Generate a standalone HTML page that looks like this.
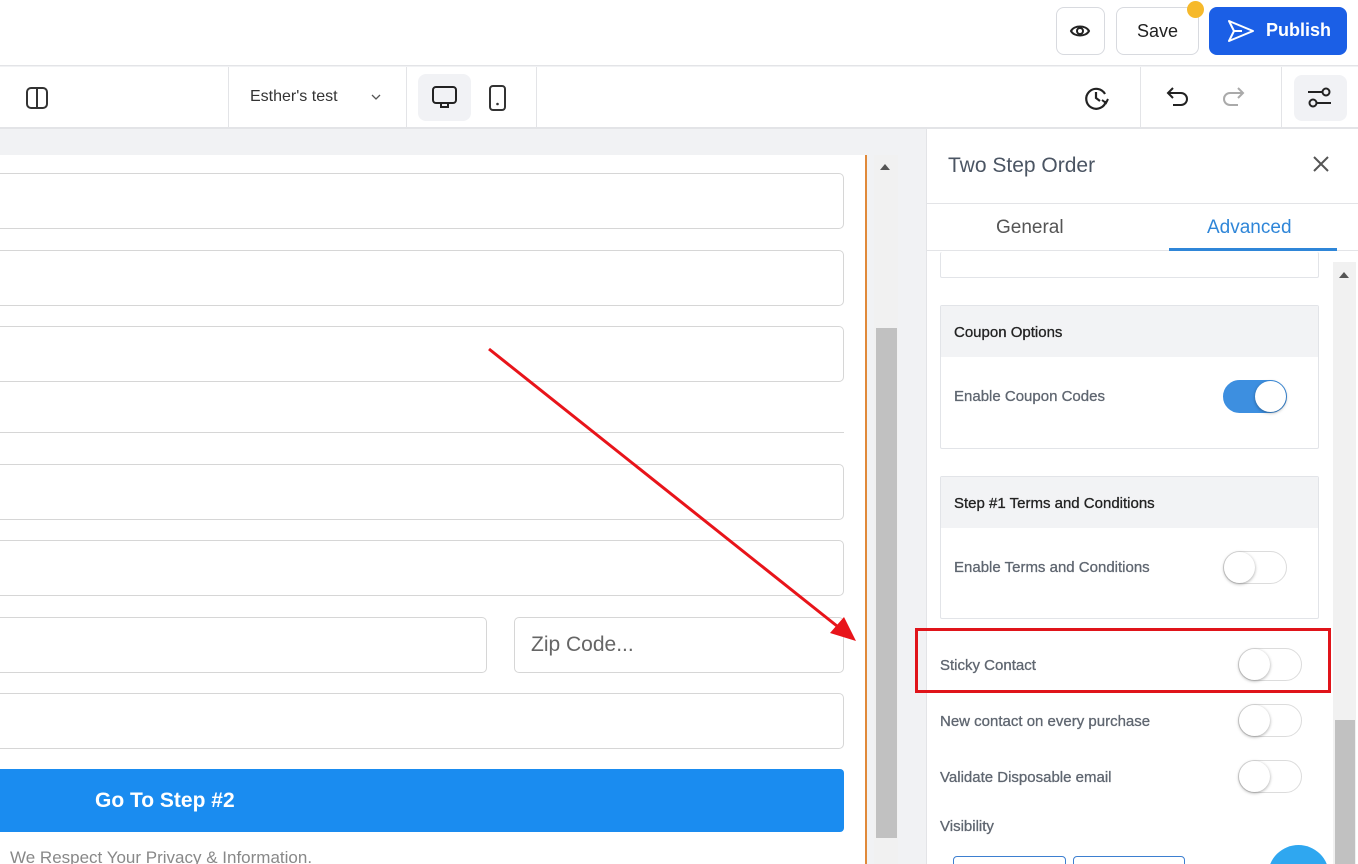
<!DOCTYPE html>
<html style="width:1358px;height:864px;overflow:hidden"><head><meta charset="utf-8"><style>
*{box-sizing:border-box;margin:0;padding:0}
body{width:1358px;height:864px;overflow:hidden;position:relative;background:#f1f2f4;font-family:"Liberation Sans",sans-serif}
.a{position:absolute}
.inp{position:absolute;background:#fff;border:1px solid #d6d6d6;border-radius:5px}
.tg{position:absolute;width:64px;height:33px;border:1px solid #dcdcdc;border-radius:17px;background:#fff}
.tg::after{content:"";position:absolute;left:0;top:0;width:31px;height:31px;border-radius:50%;background:#fff;box-shadow:0 1px 3px rgba(0,0,0,.35)}
.tg.on{background:#3d8fe0;border-color:#3d8fe0}
.tg.on::after{left:31px}
.lbl{position:absolute;font-size:15px;color:#5f6670;-webkit-text-stroke:0.3px #5f6670}
.box{position:absolute;left:940px;width:379px;border:1px solid #e2e4e8;border-radius:2px;background:#fff}
.box .h{height:51px;background:#f2f3f5;font-size:15px;color:#222;padding:18px 0 0 13px;-webkit-text-stroke:0.3px #222}
.vl{position:absolute;top:67px;width:1px;height:61px;background:#e3e4e7}
</style></head><body>
<div class="a" style="left:0;top:0;width:1358px;height:66px;background:#fff;border-bottom:1px solid #e3e4e7"></div>
<div class="a" style="left:1056px;top:7px;width:49px;height:48px;border:1px solid #d8dadf;border-radius:8px;background:#fff"></div>
<svg class="a" style="left:1069px;top:21px" width="22" height="20" viewBox="0 0 22 20"><path d="M2 10C5 4 17 4 20 10C17 16 5 16 2 10Z" fill="none" stroke="#222" stroke-width="2"/><circle cx="11" cy="10" r="3" fill="none" stroke="#222" stroke-width="2"/></svg>
<div class="a" style="left:1116px;top:7px;width:83px;height:48px;border:1px solid #d8dadf;border-radius:8px;background:#fff;font-size:18px;color:#222;text-align:center;line-height:46px">Save</div>
<div class="a" style="left:1187px;top:1px;width:17px;height:17px;border-radius:50%;background:#f6b92b"></div>
<div class="a" style="left:1209px;top:7px;width:138px;height:48px;border-radius:8px;background:#1b5fe6;color:#fff;font-size:18px;font-weight:bold;line-height:46px;padding-left:57px">Publish</div>
<svg class="a" style="left:1227px;top:19px" width="28" height="24" viewBox="0 0 28 24"><path d="M2 2L26 12L2 22L7 12Z M7 12H15" fill="none" stroke="#fff" stroke-width="2" stroke-linejoin="round"/></svg>
<div class="a" style="left:0;top:67px;width:1358px;height:62px;background:#fff;border-bottom:2px solid #e3e4e7"></div>
<div class="vl" style="left:228px"></div><div class="vl" style="left:406px"></div><div class="vl" style="left:536px"></div><div class="vl" style="left:1140px"></div><div class="vl" style="left:1281px"></div>
<svg class="a" style="left:25px;top:86px" width="24" height="24" viewBox="0 0 24 24"><rect x="2" y="2" width="20" height="20" rx="4" fill="none" stroke="#333" stroke-width="2"/><path d="M12 2V22" stroke="#333" stroke-width="2"/></svg>
<div class="a" style="left:250px;top:88px;font-size:16px;color:#333">Esther's test</div>
<svg class="a" style="left:370px;top:92px" width="12" height="10" viewBox="0 0 12 10"><path d="M2 3L6 7L10 3" fill="none" stroke="#555" stroke-width="1.3"/></svg>
<div class="a" style="left:418px;top:74px;width:53px;height:47px;border-radius:8px;background:#f1f2f5"></div>
<svg class="a" style="left:431px;top:85px" width="28" height="26" viewBox="0 0 28 26"><rect x="2" y="2" width="23" height="16" rx="3" fill="none" stroke="#222" stroke-width="2"/><rect x="10" y="18" width="7" height="4" fill="none" stroke="#222" stroke-width="2"/></svg>
<svg class="a" style="left:488px;top:84px" width="20" height="28" viewBox="0 0 20 28"><rect x="2" y="2" width="15" height="24" rx="3" fill="none" stroke="#333" stroke-width="2"/><circle cx="9.5" cy="20" r="1.3" fill="#333"/></svg>
<svg class="a" style="left:1083px;top:84px" width="28" height="28" viewBox="0 0 28 28"><path d="M22 10A10 10 0 1 0 23 17" fill="none" stroke="#222" stroke-width="2.2"/><path d="M13 8V14L17 17" fill="none" stroke="#222" stroke-width="2.2"/><path d="M19 16L23 19L25 15" fill="none" stroke="#222" stroke-width="2"/></svg>
<svg class="a" style="left:1165px;top:85px" width="26" height="24" viewBox="0 0 26 24"><path d="M8 3L3 8L8 13M3 8H16A6 6 0 0 1 16 20H8" fill="none" stroke="#222" stroke-width="2"/></svg>
<svg class="a" style="left:1220px;top:85px" width="26" height="24" viewBox="0 0 26 24"><path d="M18 3L23 8L18 13M23 8H10A6 6 0 0 0 10 20H18" fill="none" stroke="#aaa" stroke-width="2"/></svg>
<div class="a" style="left:1294px;top:75px;width:53px;height:46px;border-radius:8px;background:#f1f2f5"></div>
<svg class="a" style="left:1306px;top:86px" width="28" height="24" viewBox="0 0 28 24"><circle cx="20" cy="6" r="3.5" fill="none" stroke="#222" stroke-width="2"/><path d="M2 6H16" stroke="#222" stroke-width="2"/><circle cx="7" cy="17" r="3.5" fill="none" stroke="#222" stroke-width="2"/><path d="M11 17H25" stroke="#222" stroke-width="2"/></svg>
<div class="a" style="left:0;top:155px;width:866px;height:709px;background:#fff"></div>
<div class="a" style="left:865px;top:155px;width:2px;height:709px;background:#e0893a"></div>
<div class="a" style="left:874px;top:155px;width:24px;height:709px;background:#f1f1f1"></div>
<div class="a" style="left:876px;top:328px;width:21px;height:510px;background:#c1c1c1"></div>
<div class="a" style="left:880px;top:164px;width:0;height:0;border-left:5px solid transparent;border-right:5px solid transparent;border-bottom:6px solid #555"></div>
<div class="inp" style="left:-10px;top:173px;width:854px;height:56px"></div>
<div class="inp" style="left:-10px;top:250px;width:854px;height:56px"></div>
<div class="inp" style="left:-10px;top:326px;width:854px;height:56px"></div>
<div class="a" style="left:0;top:432px;width:844px;height:1px;background:#d6d6d6"></div>
<div class="inp" style="left:-10px;top:464px;width:854px;height:56px"></div>
<div class="inp" style="left:-10px;top:540px;width:854px;height:56px"></div>
<div class="inp" style="left:-10px;top:617px;width:497px;height:56px"></div>
<div class="inp" style="left:514px;top:617px;width:330px;height:56px;font-size:21px;color:#666;padding:15px 0 0 16px">Zip Code...</div>
<div class="inp" style="left:-10px;top:693px;width:854px;height:56px"></div>
<div class="a" style="left:-10px;top:769px;width:854px;height:63px;background:#1a8cf0;border-radius:4px;color:#fff;font-size:21px;font-weight:bold;padding:20px 0 0 105px">Go To Step #2</div>
<div class="a" style="left:10px;top:848px;font-size:17px;color:#888">We Respect Your Privacy &amp; Information.</div>
<div class="a" style="left:926px;top:129px;width:432px;height:735px;background:#fff;border-left:1px solid #e3e4e7"></div>
<div class="a" style="left:948px;top:154px;font-size:21px;color:#4b5563">Two Step Order</div>
<svg class="a" style="left:1312px;top:155px" width="18" height="18" viewBox="0 0 18 18"><path d="M2 2L16 16M16 2L2 16" stroke="#555" stroke-width="2"/></svg>
<div class="a" style="left:926px;top:203px;width:432px;height:1px;background:#e3e4e7"></div>
<div class="a" style="left:926px;top:250px;width:432px;height:1px;background:#e3e4e7"></div>
<div class="a" style="left:996px;top:217px;font-size:19px;color:#555">General</div>
<div class="a" style="left:1207px;top:217px;font-size:19px;color:#2f86d8">Advanced</div>
<div class="a" style="left:1169px;top:248px;width:168px;height:3px;background:#2f86d8"></div>
<div class="a" style="left:1333px;top:262px;width:23px;height:602px;background:#f1f1f1"></div>
<div class="a" style="left:1335px;top:720px;width:20px;height:144px;background:#c1c1c1"></div>
<div class="a" style="left:1339px;top:272px;width:0;height:0;border-left:5px solid transparent;border-right:5px solid transparent;border-bottom:6px solid #555"></div>
<div class="box" style="top:252px;height:26px;border-top:none"></div>
<div class="box" style="top:305px;height:144px"><div class="h">Coupon Options</div></div>
<div class="lbl" style="left:954px;top:388px">Enable Coupon Codes</div>
<div class="tg on" style="left:1223px;top:380px"></div>
<div class="box" style="top:476px;height:143px"><div class="h">Step #1 Terms and Conditions</div></div>
<div class="lbl" style="left:954px;top:559px">Enable Terms and Conditions</div>
<div class="tg" style="left:1223px;top:551px"></div>
<div class="lbl" style="left:940px;top:657px">Sticky Contact</div>
<div class="tg" style="left:1238px;top:648px"></div>
<div class="lbl" style="left:940px;top:713px">New contact on every purchase</div>
<div class="tg" style="left:1238px;top:704px"></div>
<div class="lbl" style="left:940px;top:769px">Validate Disposable email</div>
<div class="tg" style="left:1238px;top:760px"></div>
<div class="lbl" style="left:940px;top:818px">Visibility</div>
<div class="a" style="left:953px;top:856px;width:113px;height:20px;border:1px solid #3d7fd0;border-radius:4px"></div>
<div class="a" style="left:1073px;top:856px;width:112px;height:20px;border:1px solid #3d7fd0;border-radius:4px"></div>
<div class="a" style="left:1268px;top:845px;width:61px;height:61px;border-radius:50%;background:#2fa7f0"></div>
<div class="a" style="left:915px;top:628px;width:416px;height:65px;border:3px solid #e0141a"></div>
<svg class="a" style="left:0;top:0" width="1358" height="864"><line x1="489" y1="349" x2="842" y2="630" stroke="#e8141a" stroke-width="3"/><path d="M856 641L830 633L844 617Z" fill="#e8141a"/></svg>
</body></html>
